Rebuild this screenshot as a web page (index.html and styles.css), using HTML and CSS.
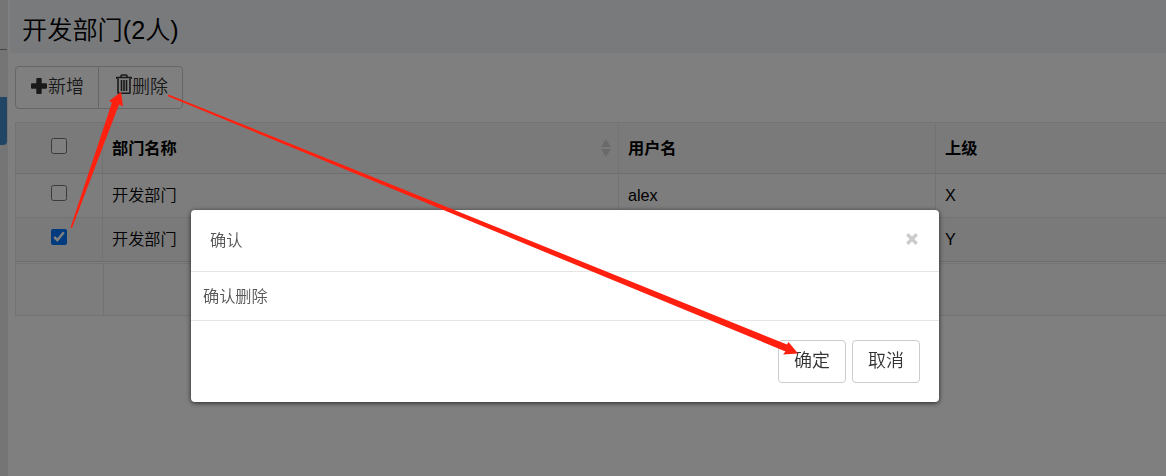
FILE: index.html
```html
<!DOCTYPE html>
<html lang="zh-CN">
<head>
    <meta charset="UTF-8">
    <meta name="viewport" content="width=device-width, initial-scale=1.0">
    <title>开发部门</title>
    <link rel="stylesheet" href="styles.css">
</head>
<body>
    <div class="page">
        <!-- 左侧菜单边缘 -->
        <aside class="sidebar">
            <div class="sidebar-line"></div>
            <div class="sidebar-active"></div>
        </aside>

        <main class="content">
            <h1 class="title">开发部门(2人)</h1>

            <div class="toolbar">
                <button class="btn tool-btn" type="button">
                    <svg class="icon icon-plus" viewBox="0 0 16 16"><path d="M6.300 0h3.400a1 1 0 0 1 1 1v4.300H15a1 1 0 0 1 1 1v3.400a1 1 0 0 1-1 1h-4.300V15a1 1 0 0 1-1 1H6.300a1 1 0 0 1-1-1v-4.300H1a1 1 0 0 1-1-1V6.300a1 1 0 0 1 1-1h4.300V1a1 1 0 0 1 1-1z"/></svg><span>新增</span>
                </button>
                <button class="btn tool-btn" type="button">
                    <svg class="icon icon-trash" viewBox="0 0 16 20"><path d="M5 3V2Q5 1 6 1h4Q11 1 11 2v1M0 5V3.500h16V5M2 4.500v14q0 .8.8.8h10.400q.8 0 .8-.8v-14M5.500 6v11M8 6v11M10.500 6v11"/></svg><span>删除</span>
                </button>
            </div>

            <table class="table">
                <thead>
                    <tr>
                        <th class="check"><input type="checkbox"></th>
                        <th class="name">
                            <div class="sortable">
                                <span>部门名称</span>
                                <svg class="sort" viewBox="0 0 10 18"><path d="M5 0l5 8H0zM0 10h10l-5 8z"/></svg>
                            </div>
                        </th>
                        <th class="user">用户名</th>
                        <th>上级</th>
                    </tr>
                </thead>
                <tbody>
                    <tr>
                        <td class="check"><input type="checkbox"></td>
                        <td>开发部门</td>
                        <td>alex</td>
                        <td>X</td>
                    </tr>
                    <tr class="selected">
                        <td class="check"><input type="checkbox" checked></td>
                        <td>开发部门</td>
                        <td></td>
                        <td>Y</td>
                    </tr>
                </tbody>
            </table>
            <div class="table-foot">
                <div class="foot-check"></div>
                <div class="foot-rest"></div>
            </div>
        </main>
    </div>

    <!-- 确认弹窗 -->
    <div class="overlay">
        <div class="modal">
            <div class="modal-header">
                <span>确认</span>
                <svg class="close" viewBox="0 0 12 12"><path d="M1.300 1.300l9.400 9.400M10.700 1.300l-9.400 9.400"/></svg>
            </div>
            <div class="modal-body">确认删除</div>
            <div class="modal-footer">
                <button class="btn" type="button">确定</button>
                <button class="btn" type="button">取消</button>
            </div>
        </div>
    </div>

    <!-- 操作步骤箭头 -->
    <svg class="arrows" viewBox="0 0 1166 476">
        <path d="M70.500 227.500L112 102.500L109 101L121 92L123 106.500L119 104.500L72 228z"/>
        <path d="M168.500 94.500L787 344.500L788.500 342L798 353.500L783 354.500L785.500 351.500L168 96.200z"/>
    </svg>
</body>
</html>
```

FILE: styles.css
```css
* {
    margin: 0;
    padding: 0;
    box-sizing: border-box;
}

body {
    background: #fff;
    color: #000;
    font-family: "Liberation Sans", "Noto Sans CJK SC", sans-serif;
    font-size: 16.2px;
    overflow: hidden;
}

.page {
    display: flex;
    height: 476px;
}

.sidebar {
    flex: 0 0 8px;
    padding-right: 1px;
    background: #eaeaea;
}

.sidebar-line {
    height: 50px;
    border-bottom: 1px solid #888;
}

.sidebar-active {
    height: 48px;
    margin-top: 47px;
    border-radius: 0 0 4px 0;
    background: #428bca;
}

.content {
    flex: 1;
    min-width: 0;
}

.title {
    height: 53px;
    margin-left: 2px;
    padding-left: 12px;
    background: #f3f5f9;
    font-size: 25.2px;
    font-weight: 350;
    line-height: 60px;
}

.btn {
    height: 43px;
    padding: 0 15px;
    border: 1px solid #ccc;
    border-radius: 4px;
    background: #fff;
    color: #333;
    font-family: inherit;
    font-size: 18px;
    font-weight: 350;
    line-height: 39px;
    white-space: nowrap;
}

.toolbar {
    display: flex;
    padding: 13px 0 13px 7px;
}

.tool-btn {
    display: flex;
    align-items: center;
}

.tool-btn:first-child {
    width: 84px;
    border-radius: 4px 0 0 4px;
}

.tool-btn:last-child {
    width: 85px;
    margin-left: -1px;
    padding-left: 17px;
    border-radius: 0 4px 4px 0;
}

.icon {
    flex: none;
    width: 16px;
    margin-right: 1px;
    fill: #333;
}

.icon-plus {
    height: 16px;
    margin-top: -4px;
}

.icon-trash {
    height: 20px;
    margin-top: -7px;
    margin-right: 0;
    fill: none;
    stroke: #333;
    stroke-width: 1.6;
}

.table {
    width: 1160px;
    margin-left: 7px;
    border-collapse: collapse;
    table-layout: fixed;
    font-weight: 350;
}

.table th,
.table td {
    height: 44px;
    padding: 0 9px 1px 9px;
    border: 1px solid #e7e7e7;
    background: #fafafa;
    text-align: left;
    line-height: 24px;
}

.table th {
    height: 51px;
    border-bottom-color: #ddd;
    background: #f5f5f5;
    font-weight: 700;
}

.table .selected td {
    border-bottom-color: #d8d8d8;
    background: #f5f5f5;
}

.table .check {
    width: 87px;
    padding: 0;
    text-align: center;
}

.table .name {
    width: 516px;
}

.table .user {
    width: 317px;
}

.check input {
    display: block;
    width: 16px;
    height: 16px;
    margin: -5px auto 0;
}

.sortable {
    display: flex;
    align-items: center;
    justify-content: space-between;
}

.sort {
    width: 10px;
    height: 18px;
    margin-right: -2px;
    fill: #d5d5d5;
}

.table-foot {
    display: flex;
    height: 53px;
    margin: 1px 0 0 7px;
    border: 1px solid #e7e7e7;
    border-right: 0;
    background: #fafafa;
}

.foot-check {
    width: 88px;
    border-right: 1px solid #e7e7e7;
}

.overlay {
    position: fixed;
    inset: 0;
    padding: 210px 0 0 191px;
    background: rgba(0, 0, 0, 0.5);
}

.modal {
    width: 748px;
    height: 192px;
    border-radius: 4px;
    background: #fff;
    box-shadow: 0 1px 5px rgba(0, 0, 0, 0.7);
    color: #555;
    font-weight: 350;
}

.modal-header {
    display: flex;
    align-items: center;
    justify-content: space-between;
    height: 62px;
    padding: 0 21px 3px 19px;
    border-bottom: 1px solid #e5e5e5;
}

.close {
    width: 12px;
    height: 12px;
    fill: none;
    stroke: #ccc;
    stroke-width: 3.4;
}

.modal-body {
    height: 49px;
    padding-left: 12px;
    border-bottom: 1px solid #e5e5e5;
    line-height: 48px;
}

.modal-footer {
    display: flex;
    justify-content: flex-end;
    gap: 6px;
    padding: 19px 19px 0;
}

.modal-footer .btn {
    width: 68px;
}

.arrows {
    position: fixed;
    inset: 0;
    width: 1166px;
    height: 476px;
    fill: #ff2010;
    pointer-events: none;
}
```
